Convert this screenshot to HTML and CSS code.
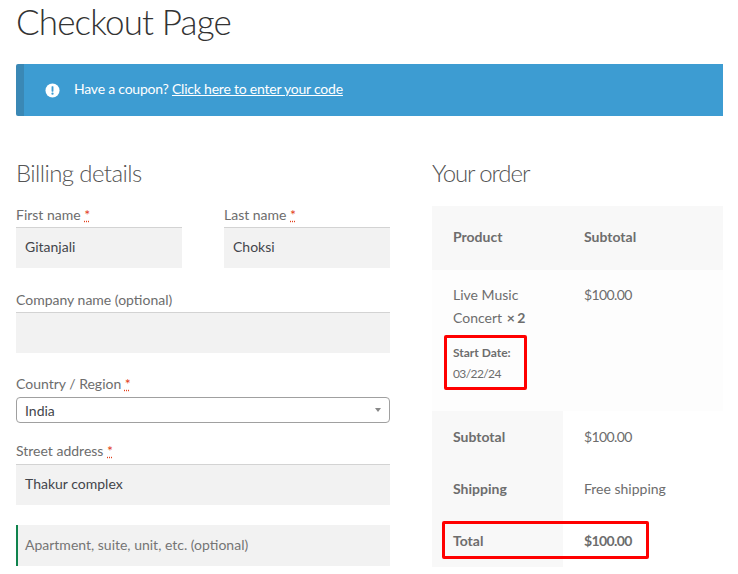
FILE: index.html
```html
<!DOCTYPE html>
<html lang="en">
<head>
<meta charset="utf-8">
<title>Checkout Page</title>
<link rel="stylesheet" href="styles.css">
</head>
<body>
<main class="page">
  <h1 class="title">Checkout Page</h1>
  <div class="notice">
    <svg class="notice-icon" viewBox="0 0 16 16" width="15" height="15" aria-hidden="true">
      <circle cx="8" cy="8" r="7.5" fill="#fff"/>
      <rect x="7" y="3.4" width="2" height="5.8" rx="0.6" fill="#3d9cd2"/>
      <circle cx="8" cy="11.4" r="1.2" fill="#3d9cd2"/>
    </svg>
    <span class="notice-text">Have a coupon? <a class="notice-link" href="#">Click here to enter your code</a></span>
  </div>
  <div class="columns">
    <form class="billing">
      <h3 class="section-title">Billing details</h3>
      <div class="name-row">
        <div class="field">
          <label class="label">First name <abbr class="req">*</abbr></label>
          <div class="input">Gitanjali</div>
        </div>
        <div class="field">
          <label class="label">Last name <abbr class="req">*</abbr></label>
          <div class="input">Choksi</div>
        </div>
      </div>
      <div class="field company">
        <label class="label">Company name (optional)</label>
        <div class="input"></div>
      </div>
      <div class="field country">
        <label class="label label-tall">Country / Region <abbr class="req">*</abbr></label>
        <div class="select">India<span class="caret"></span></div>
      </div>
      <div class="field street">
        <label class="label label-tall">Street address <abbr class="req">*</abbr></label>
        <div class="input">Thakur complex</div>
      </div>
      <div class="input apartment">Apartment, suite, unit, etc. (optional)</div>
    </form>
    <section class="order">
      <h3 class="section-title section-title-order">Your order</h3>
      <div class="order-wrap">
        <table class="order-table">
          <thead>
            <tr class="head-row"><th>Product</th><th>Subtotal</th></tr>
          </thead>
          <tbody>
            <tr class="item-row">
              <td>
                <div class="product">Live Music</div>
                <div class="product">Concert <strong class="qty">× 2</strong></div>
                <div class="meta"><strong class="meta-key">Start Date:</strong><span class="meta-val">03/22/24</span></div>
              </td>
              <td><div class="product price">$100.00</div></td>
            </tr>
          </tbody>
          <tfoot>
            <tr class="foot-row"><th>Subtotal</th><td class="price">$100.00</td></tr>
            <tr class="foot-row"><th>Shipping</th><td>Free shipping</td></tr>
            <tr class="foot-row"><th>Total</th><td class="price"><strong>$100.00</strong></td></tr>
          </tfoot>
        </table>
        <div class="mark mark-date"></div>
        <div class="mark mark-total"></div>
      </div>
    </section>
  </div>
</main>
</body>
</html>
```
FILE: styles.css
```css
* { box-sizing: border-box; }
html, body { margin: 0; padding: 0; background: #fff; overflow: hidden; }
body {
  height: 574px;
  font-family: "Lato", "Liberation Sans", sans-serif;
  font-size: 14px;
  color: #6d6d6d;
}
.page { padding: 0 15px 0 16px; }
.title {
  margin: 0;
  height: 64px;
  font-size: 35px;
  line-height: 42px;
  font-weight: 300;
  letter-spacing: -0.85px;
  color: #333;
}
.notice {
  display: flex;
  align-items: center;
  height: 52px;
  padding-left: 21px;
  gap: 14px;
  background: #3d9cd2;
  border-left: 8px solid #3a88b5;
  border-radius: 2px 0 0 2px;
  color: #fff;
  font-size: 14px;
}
.notice-icon { flex: none; }
.notice-text { padding-bottom: 4px; letter-spacing: -0.22px; }
.notice-link { color: #fff; text-decoration: underline; }
.columns { display: flex; justify-content: space-between; padding-top: 42px; }
.billing { width: 374px; }
.order { width: 291px; }
.section-title {
  margin: 0;
  height: 48px;
  font-size: 24px;
  line-height: 30px;
  font-weight: 300;
  letter-spacing: -0.6px;
  color: #555;
}
.section-title-order { letter-spacing: -1.1px; }
.name-row { display: flex; justify-content: space-between; }
.name-row .field { width: 166px; }
.label { display: block; height: 21px; line-height: 17px; color: #6d6d6d; }
.label-tall { height: 22px; }
.req { color: #e2401c; text-decoration: underline dotted; }
.input {
  height: 41px;
  padding-left: 9px;
  line-height: 38px;
  background: #f2f2f2;
  border-top: 1px solid #d3d3d3;
  color: #43454b;
}
.company { margin-top: 23px; }
.country { margin-top: 22px; }
.select {
  position: relative;
  height: 26px;
  padding-left: 8px;
  line-height: 25px;
  background: #fff;
  border: 1px solid #a0a0a0;
  border-radius: 4px;
  color: #43454b;
}
.caret {
  position: absolute;
  right: 8px;
  top: 10px;
  border-style: solid;
  border-width: 4px 3px 0;
  border-color: #888 transparent transparent;
}
.street { margin-top: 19px; }
.apartment {
  margin-top: 20px;
  padding-left: 7px;
  border-top: 0;
  border-left: 2px solid #0f834d;
  color: #757575;
  line-height: 40px;
}
.order-wrap { position: relative; }
.order-table { width: 291px; border-collapse: collapse; table-layout: fixed; }
.order-table th, .order-table td {
  padding: 0 0 3px 21px;
  text-align: left;
  vertical-align: middle;
  font-weight: 400;
}
.order-table th { font-weight: 700; }
.order-table th:first-child, .order-table td:first-child { width: 131px; }
.head-row { height: 64px; background: #f8f8f8; }
.item-row { height: 141px; background: #fdfdfd; }
.order-table .item-row td { vertical-align: top; padding-top: 13px; }
.product { line-height: 23px; }
.price { letter-spacing: -0.6px; }
.qty { margin-left: 1px; letter-spacing: -0.5px; }
.meta { margin-top: 14px; font-size: 12px; }
.meta-key, .meta-val { display: block; line-height: 20px; }
.meta-val { margin-top: 1px; letter-spacing: -0.6px; }
.foot-row { height: 52px; }
.order-table .foot-row th, .order-table .foot-row td { padding-bottom: 1px; }
.foot-row th { background: #f8f8f8; }
.mark {
  position: absolute;
  border: 3px solid #f00;
  border-radius: 2px;
}
.mark-date { left: 12px; top: 129px; width: 83px; height: 55px; }
.mark-total { left: 10px; top: 315px; width: 207px; height: 38px; }
```
